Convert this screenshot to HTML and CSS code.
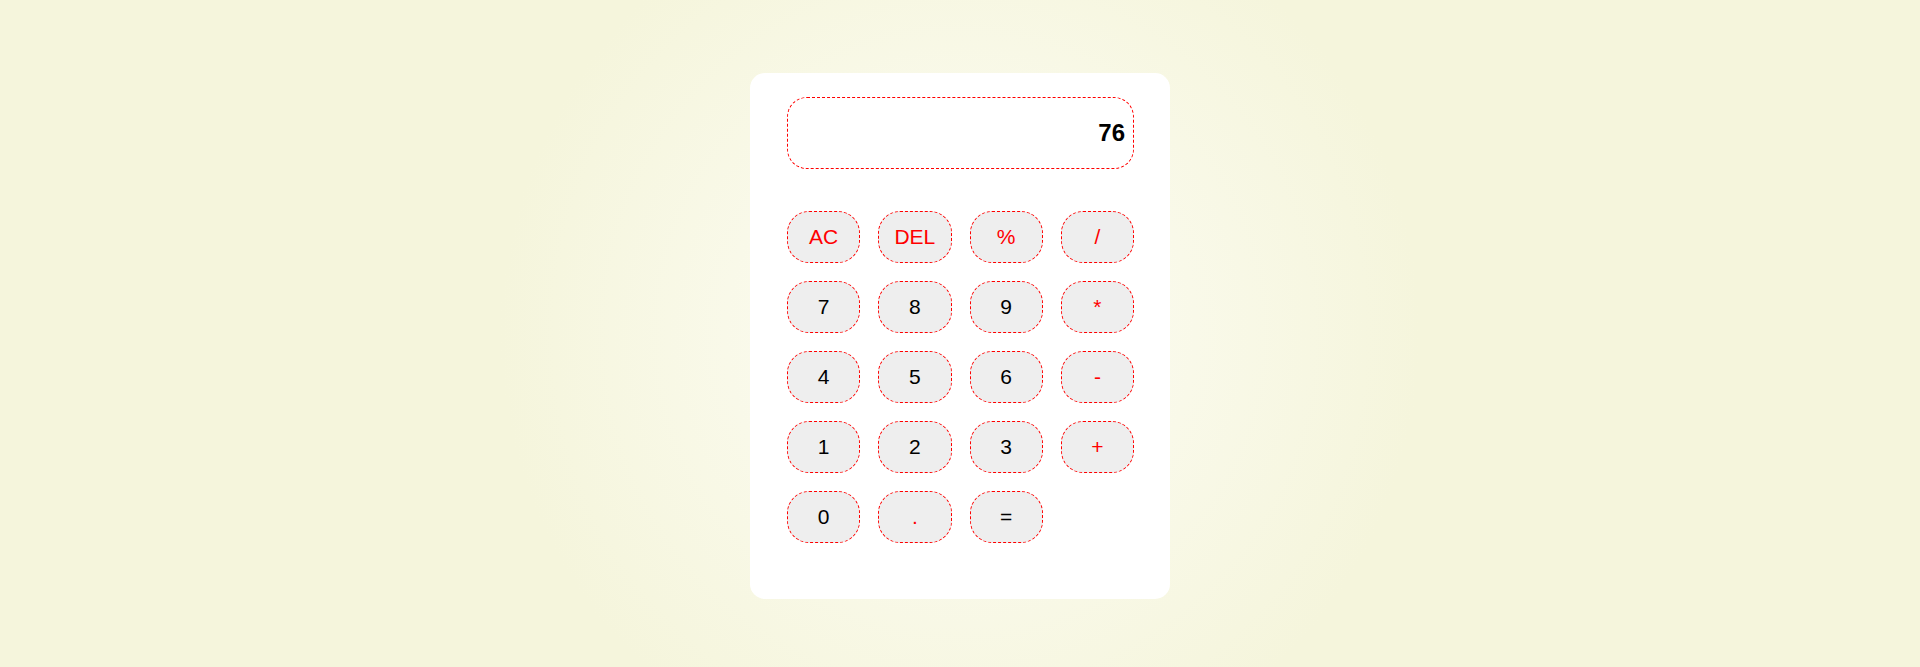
FILE: index.html
```html
<!DOCTYPE html>
<html>
<head>
<meta charset="utf-8">
<title>Calculator</title>
<link rel="stylesheet" href="styles.css">
</head>
<body>
<div class="page">
  <div class="calculator">
    <div class="display">76</div>
    <div class="keys">
      <button class="key op">AC</button>
      <button class="key op">DEL</button>
      <button class="key op">%</button>
      <button class="key op">/</button>
      <button class="key">7</button>
      <button class="key">8</button>
      <button class="key">9</button>
      <button class="key op">*</button>
      <button class="key">4</button>
      <button class="key">5</button>
      <button class="key">6</button>
      <button class="key op">-</button>
      <button class="key">1</button>
      <button class="key">2</button>
      <button class="key">3</button>
      <button class="key op">+</button>
      <button class="key">0</button>
      <button class="key op">.</button>
      <button class="key">=</button>
    </div>
  </div>
</div>
</body>
</html>
```

FILE: styles.css
```css
html, body {
  margin: 0;
  padding: 0;
  height: 100%;
}

body {
  font-family: "Liberation Sans", Arial, sans-serif;
  background: radial-gradient(circle at 50% 50%, #fdfdf8 0px, #fafaec 180px, #f5f5dc 460px);
}

.page {
  display: flex;
  justify-content: center;
  padding-top: 73px;
}

.calculator {
  width: 420px;
  box-sizing: border-box;
  background: #ffffff;
  border-radius: 15px;
  padding: 24px 36px 56px 37px;
}

.display {
  height: 72px;
  box-sizing: border-box;
  border: 1px dashed #ff0000;
  border-radius: 20px;
  display: flex;
  align-items: center;
  justify-content: flex-end;
  padding-right: 8px;
  font-size: 24px;
  font-weight: bold;
  color: #000;
  margin-bottom: 42px;
}

.keys {
  display: grid;
  grid-template-columns: repeat(4, 1fr);
  gap: 18px;
}

.key {
  height: 52px;
  box-sizing: border-box;
  background: #eeeeee;
  border: 1px dashed #ff0000;
  border-radius: 22px;
  font-family: "Liberation Sans", Arial, sans-serif;
  font-size: 21px;
  color: #000;
  padding: 0;
  cursor: pointer;
}

.key.op {
  color: #ff0000;
}
```
